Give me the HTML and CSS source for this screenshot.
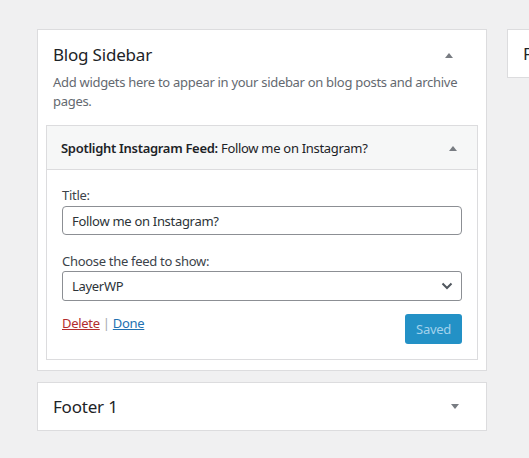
FILE: index.html
```html
<!DOCTYPE html>
<html>
<head>
  <title>Widgets</title>
  <link rel="stylesheet" href="styles.css">
</head>
<body>
  <div class="widgets">
    <div class="column">
      <div class="sidebar open">
        <div class="sidebar-name">
          <h2>Blog Sidebar</h2>
          <svg class="arrow" width="10" height="6" viewBox="0 0 10 6"><path d="M1 6 L5 1 L9 6 Z" fill="#787c82"/></svg>
        </div>
        <p class="sidebar-desc">Add widgets here to appear in your sidebar on blog posts and archive pages.</p>

        <div class="widget">
          <div class="widget-top">
            <h3><strong>Spotlight Instagram Feed:</strong> Follow me on Instagram?</h3>
            <svg class="arrow" width="10" height="6" viewBox="0 0 10 6"><path d="M1 6 L5 1 L9 6 Z" fill="#787c82"/></svg>
          </div>
          <div class="widget-inside">
            <label class="field-label" for="title">Title:</label>
            <input type="text" id="title" class="text-input" value="Follow me on Instagram?">

            <label class="field-label second" for="feed">Choose the feed to show:</label>
            <div class="select">
              <span>LayerWP</span>
              <svg width="12" height="8" viewBox="0 0 12 8"><path d="M1.5 1.5 L6 6 L10.5 1.5" fill="none" stroke="#50575e" stroke-width="2"/></svg>
            </div>

            <div class="widget-control">
              <div class="actions"><a href="#" class="delete">Delete</a> <span class="sep">|</span> <a href="#" class="done">Done</a></div>
              <button class="saved" disabled>Saved</button>
            </div>
          </div>
        </div>
      </div>

      <div class="sidebar closed">
        <div class="sidebar-name">
          <h2>Footer 1</h2>
          <svg class="arrow" width="10" height="6" viewBox="0 0 10 6"><path d="M1 0 L5 5 L9 0 Z" fill="#787c82"/></svg>
        </div>
      </div>
    </div>

    <div class="column side">
      <div class="sidebar closed">
        <div class="sidebar-name">
          <h2>Footer 2</h2>
        </div>
      </div>
    </div>
  </div>
</body>
</html>
```

FILE: styles.css
```css
html, body { overflow: hidden; }
body { margin: 0; background: #f0f0f1; font-family: "Noto Sans", "Open Sans", sans-serif; font-size: 13px; letter-spacing: -0.3px; color: #3c434a; }
.widgets { display: flex; gap: 20px; padding: 29px 0 0 37px; }
.column { width: 450px; flex-shrink: 0; display: flex; flex-direction: column; gap: 11px; }
.side { width: 300px; }
.sidebar { background: #fff; border: 1px solid #dcdcde; box-sizing: border-box; }
.sidebar.open { padding: 0 8px 10px; }
.sidebar-name { display: flex; align-items: center; justify-content: space-between; }
.open .sidebar-name { padding: 12px 24px 0 7px; }
.closed .sidebar-name { padding: 11px 26px 11px 15px; }
.sidebar-name h2 { margin: 0; font-size: 17px; font-weight: 400; line-height: 25px; letter-spacing: -0.2px; color: #1d2327; }
.sidebar-desc { margin: 6px 0 14px 7px; line-height: 19px; color: #646970; }

.widget { border: 1px solid #dcdcde; }
.widget-top { display: flex; align-items: center; justify-content: space-between; height: 43px; padding: 0 19px 0 14px; background: #f6f7f7; border-bottom: 1px solid #dcdcde; }
.widget-top h3 { margin: 0; font-size: 13px; font-weight: 400; color: #1d2327; }
.widget-top strong { font-weight: 600; }
.widget-inside { padding: 16px 15px 15px; }
.field-label { display: block; line-height: 19px; color: #3c434a; }
.field-label.second { margin-top: 17px; }
.text-input { display: block; width: 100%; box-sizing: border-box; height: 29px; margin: 1px 0 0; padding: 0 9px; border: 1px solid #8c8f94; border-radius: 4px; font: inherit; font-size: 13px; letter-spacing: inherit; color: #2c3338; }
.select { display: flex; align-items: center; justify-content: space-between; height: 30px; box-sizing: border-box; padding: 0 8px 0 9px; border: 1px solid #8c8f94; border-radius: 3px; color: #2c3338; }
.widget-control { display: flex; justify-content: space-between; align-items: flex-start; margin-top: 13px; }
.actions { line-height: 19px; }
.actions a { text-decoration: underline; }
.delete { color: #b32d2e; }
.done { color: #2271b1; }
.sep { color: #a7aaad; }
.saved { width: 57px; height: 30px; border: none; border-radius: 3px; background: #2391c6; color: #a2d2ec; font: inherit; font-size: 13px; letter-spacing: inherit; padding: 0; }
```
